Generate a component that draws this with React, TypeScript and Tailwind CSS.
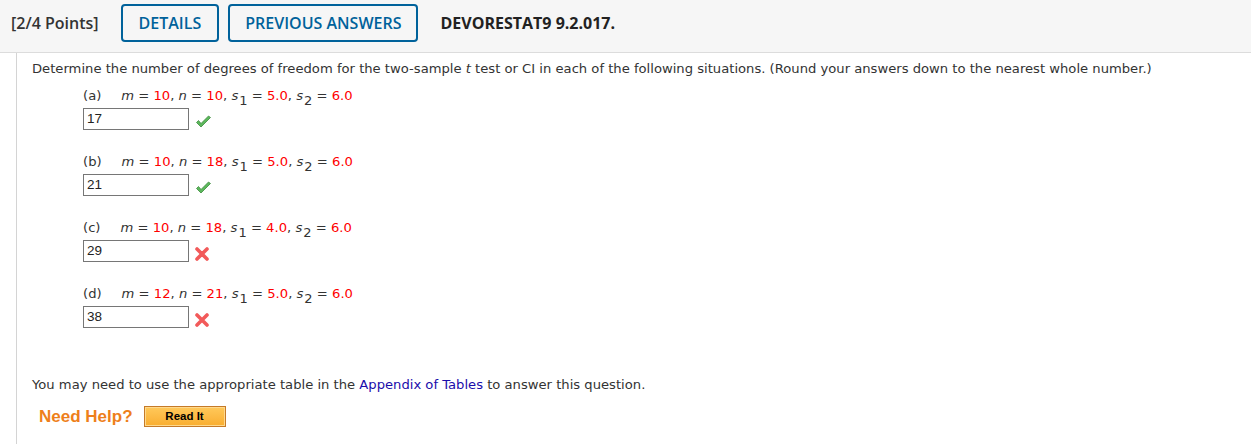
const parts = [
  { label: '(a)', m: '10', n: '10', s1: '5.0', s2: '6.0', answer: '17', ok: true },
  { label: '(b)', m: '10', n: '18', s1: '5.0', s2: '6.0', answer: '21', ok: true },
  { label: '(c)', m: '10', n: '18', s1: '4.0', s2: '6.0', answer: '29', ok: false },
  { label: '(d)', m: '12', n: '21', s1: '5.0', s2: '6.0', answer: '38', ok: false },
];

const Check = () => (
  <svg width="17" height="14" viewBox="0 0 17 14">
    <path d="M1.5 7.5 L6 12 L15.5 2.5 L13.5 1 L6 8.5 L3.5 5.5 Z" fill="#5cb85c" stroke="#3d8b3d" strokeWidth="0.8" strokeLinejoin="round" />
  </svg>
);

const Cross = () => (
  <svg width="14" height="14" viewBox="0 0 14 14">
    <path d="M2 2 L12 12 M12 2 L2 12" stroke="#f25a5a" strokeWidth="3.6" strokeLinecap="round" />
  </svg>
);

const Sub = ({ children }: { children: string }) => (
  <sub className="relative top-[5px] ml-[1px] align-baseline text-[13px]">{children}</sub>
);

export default function App() {
  return (
    <div className="min-h-[444px] bg-white text-[#333]">
      <div className="flex h-[53px] items-start border-b border-[#dcdcdc] bg-[#f6f6f6] pl-[11px] pt-[4px] font-['Open_Sans',sans-serif] text-[16px] font-semibold">
        <span className="mr-[22px] leading-[38px]">[2/4 Points]</span>
        <button className="mr-[9px] h-[38px] rounded-[4px] border-2 border-[#00629b] px-[16px] text-[#00629b]">DETAILS</button>
        <button className="mr-[22px] h-[38px] rounded-[4px] border-2 border-[#00629b] px-[15px] text-[#00629b]">PREVIOUS ANSWERS</button>
        <span className="font-bold leading-[38px] text-[#222]">DEVORESTAT9 9.2.017.</span>
      </div>
      <div className="ml-[16px] min-h-[391px] border-l border-[#d4d4d4] pl-[15px] pt-[7px] font-['DejaVu_Sans',sans-serif] text-[13.15px]">
        <p className="leading-[18px]">
          Determine the number of degrees of freedom for the two-sample <i>t</i> test or CI in each of the following situations. (Round your answers down to the nearest whole number.)
        </p>
        <div className="ml-[51px] mt-[9px]">
          {parts.map((p) => (
            <div key={p.label} className="mb-[23px]">
              <div className="h-[21px] leading-[18px]">
                <span className="mr-[20px]">{p.label}</span>
                <i>m</i> = <span className="text-[#f00]">{p.m}</span>, <i>n</i> = <span className="text-[#f00]">{p.n}</span>,{' '}
                <i>s</i>
                <Sub>1</Sub> = <span className="text-[#f00]">{p.s1}</span>, <i>s</i>
                <Sub>2</Sub> = <span className="text-[#f00]">{p.s2}</span>
              </div>
              <div className="flex items-center">
                <div className="flex h-[22px] w-[106px] items-center border border-[#767676] pl-[3px] font-['Liberation_Sans',sans-serif] text-[13.5px] text-[#222]">
                  {p.answer}
                </div>
                <span className="ml-[6px] mt-[5px] flex">{p.ok ? <Check /> : <Cross />}</span>
              </div>
            </div>
          ))}
        </div>
        <p className="mt-[48px] leading-[18px]">
          You may need to use the appropriate table in the <span className="text-[#1a0dab]">Appendix of Tables</span> to answer this question.
        </p>
        <div className="ml-[7px] mt-[10px] flex items-center font-['Liberation_Sans',sans-serif]">
          <span className="mr-[11px] text-[17px] font-bold text-[#ee7f1b]">Need Help?</span>
          <button className="h-[21px] w-[82px] border border-[#c57a28] bg-gradient-to-b from-[#ffc95a] to-[#f9ad2e] text-[11.5px] font-bold leading-none text-black shadow-[inset_0_0_0_1px_#ffd98c]">
            Read It
          </button>
        </div>
      </div>
    </div>
  );
}
